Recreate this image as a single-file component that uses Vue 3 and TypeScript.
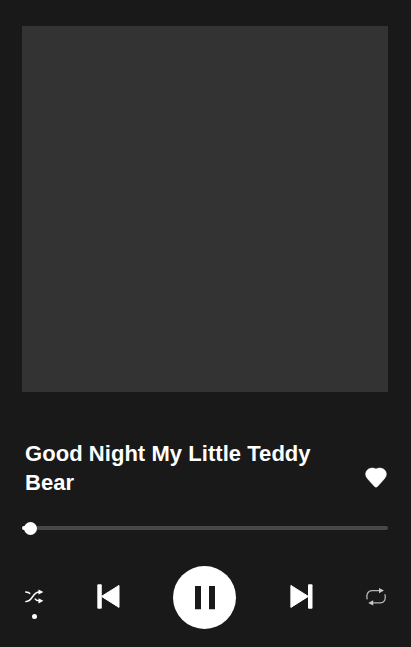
<script setup lang="ts">
import { ref, computed } from 'vue'

const title = 'Good Night My Little Teddy Bear'
const progress = ref(0)
const playing = ref(true)
const liked = ref(true)
const filled = computed(() => `${progress.value + 2}%`)
</script>

<template>
  <main class="player">
    <div class="cover"></div>
    <section class="info">
      <h1 class="title">{{ title }}</h1>
      <button class="icon-button like" aria-label="Like" @click="liked = !liked">
        <svg width="22" height="21" viewBox="0 0 22 21">
          <path :fill="liked ? '#fff' : 'none'" stroke="#fff" stroke-width="0.5" d="M11 2C13.2 .6 17 .7 19.2 2.6C21.9 5 22 8.6 19.7 11.4L12.7 19.3Q11 21.3 9.3 19.3L2.3 11.4C0 8.6 .1 5 2.8 2.6C5 .7 8.8 .6 11 2Z" />
        </svg>
      </button>
    </section>
    <div class="slider">
      <div class="fill" :style="{ width: filled }"><span class="thumb"></span></div>
    </div>
    <nav class="controls">
      <button class="icon-button shuffle" aria-label="Shuffle">
        <svg width="19" height="14" viewBox="0 0 19 14">
          <g fill="none" stroke="#fff" stroke-width="1.4">
            <path d="M.2 2C2.8 1.8 4 2.4 5.2 3.8M.2 11.6C8.4 11.8 6.7 2 14.5 2M9.8 8.6C11 10.4 12.2 10.8 14.5 10.8" />
          </g>
          <path fill="#fff" d="M13.5 -.6L18.4 2L13.5 4.6ZM13.5 8.2L18.4 10.8L13.5 13.4Z" />
        </svg>
        <span class="dot"></span>
      </button>
      <button class="icon-button prev" aria-label="Previous">
        <svg width="24" height="26" viewBox="0 0 24 26">
          <rect x=".3" y=".3" width="4.5" height="24.4" rx="1" fill="#fff" />
          <path fill="#fff" stroke="#fff" stroke-width="1" stroke-linejoin="round" d="M4.5 12.4L22 1.4V23.4Z" />
        </svg>
      </button>
      <button class="play" aria-label="Pause" @click="playing = !playing">
        <svg width="20" height="24" viewBox="0 0 20 24">
          <path v-if="playing" fill="#191919" d="M0 0H6V23.3H0ZM14 0H20V23.3H14Z" />
          <path v-else fill="#191919" d="M2 0L20 12L2 24Z" />
        </svg>
      </button>
      <button class="icon-button next" aria-label="Next">
        <svg width="24" height="26" viewBox="0 0 24 26">
          <rect x="18" y=".3" width="4.5" height="24.4" rx="1" fill="#fff" />
          <path fill="#fff" stroke="#fff" stroke-width="1" stroke-linejoin="round" d="M18.3 12.4L.9 1.4V23.4Z" />
        </svg>
      </button>
      <button class="icon-button repeat" aria-label="Repeat">
        <svg width="22" height="18" viewBox="0 0 22 18">
          <path fill="none" stroke="#b4b4b4" stroke-width="1.3" d="M1.2 11.4C-.2 7 1.8 2.6 6 2.6H13.5M18.8 6.2C20.6 10.6 18.4 14.9 14.2 14.9H7" />
          <path fill="#c8c8c8" d="M13 0L18 2.6L13 5.2ZM7.2 12.3L2.2 14.9L7.2 17.5Z" />
        </svg>
      </button>
    </nav>
  </main>
</template>

<style>
body {
  margin: 0;
  background: #191919;
}
</style>

<style scoped>
.player {
  box-sizing: border-box;
  height: 647px;
  padding: 26px 23px 0 22px;
  background: #191919;
  font-family: "Liberation Sans", Arial, sans-serif;
  overflow: hidden;
}
.cover {
  height: 366px;
  background: #333;
}
.info {
  display: flex;
  align-items: flex-start;
  justify-content: space-between;
  height: 58px;
  margin-top: 47px;
  padding: 0 1px 0 3px;
}
.title {
  width: 300px;
  margin: 0;
  color: #fff;
  font-size: 22px;
  font-weight: 700;
  line-height: 29px;
  letter-spacing: 0.05px;
}
button {
  display: block;
  padding: 0;
  border: 0;
  background: none;
}
svg {
  display: block;
  overflow: visible;
}
.like {
  margin-top: 28px;
}
.slider {
  height: 4px;
  margin-top: 29px;
  border-radius: 2px;
  background: #484848;
}
.fill {
  display: flex;
  align-items: center;
  height: 4px;
  border-radius: 2px;
  background: #fff;
}
.thumb {
  flex: none;
  width: 13px;
  height: 13px;
  margin-left: 2px;
  border-radius: 50%;
  background: #fff;
}
.controls {
  display: grid;
  grid-template-columns: 75px 76px 117px 76px 22px;
  align-items: start;
  height: 63px;
  margin-top: 36px;
}
.shuffle {
  width: 19px;
  margin: 24px 0 0 3px;
}
.dot {
  display: block;
  width: 5px;
  height: 5px;
  margin: 10px 0 0 7px;
  border-radius: 50%;
  background: #fff;
}
.prev {
  margin-top: 18px;
}
.play {
  display: grid;
  place-items: center;
  width: 63px;
  height: 63px;
  border-radius: 50%;
  background: #fff;
}
.next {
  margin-top: 18px;
}
.repeat {
  margin-top: 22px;
}
</style>
